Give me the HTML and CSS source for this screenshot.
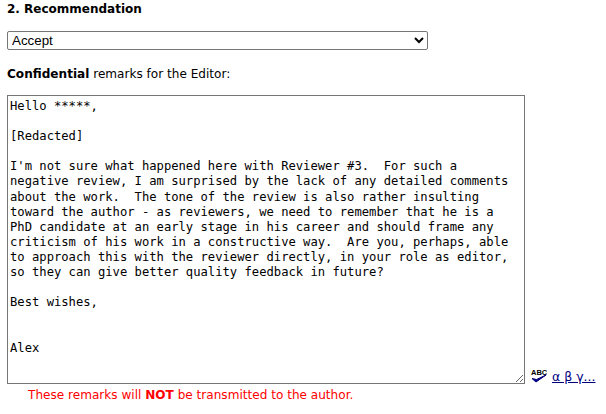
FILE: index.html
```html
<!DOCTYPE html>
<html lang="en">
<head>
    <meta charset="UTF-8">
    <title>Recommendation</title>
    <link rel="stylesheet" href="styles.css">
</head>
<body>
    <h2 class="section-title">2. Recommendation</h2>

    <select class="rec-select">
        <option>Accept</option>
        <option>Minor revision</option>
        <option>Major revision</option>
        <option>Reject</option>
    </select>

    <p class="remarks-label"><b>Confidential</b> remarks for the Editor:</p>

    <div class="remarks-row">
        <textarea class="remarks-box" spellcheck="false">Hello *****,

[Redacted]

I'm not sure what happened here with Reviewer #3.  For such a
negative review, I am surprised by the lack of any detailed comments
about the work.  The tone of the review is also rather insulting
toward the author - as reviewers, we need to remember that he is a
PhD candidate at an early stage in his career and should frame any
criticism of his work in a constructive way.  Are you, perhaps, able
to approach this with the reviewer directly, in your role as editor,
so they can give better quality feedback in future?

Best wishes,


Alex</textarea>
        <div class="tools">
            <!-- spell check icon -->
            <svg class="spell-icon" width="17" height="16" viewBox="0 0 17 16">
                <text x="1" y="7" class="spell-text">ABC</text>
                <path d="M2 10.5l4 3.5 10-7-9.5 4.5z" fill="#000080" stroke="#000080" stroke-width="1" stroke-linejoin="round"/>
            </svg>
            <a href="#" class="symbols">α β γ...</a>
        </div>
    </div>

    <p class="warning">These remarks will <b>NOT</b> be transmitted to the author.</p>
</body>
</html>
```

FILE: styles.css
```css
* {
    box-sizing: border-box;
}

html, body {
    height: 100%;
}

body {
    margin: 0;
    padding: 0 7px;
    overflow: hidden;
    background-color: #fff;
    color: #000;
    font-family: "DejaVu Sans", sans-serif;
    font-size: 12.08px;
}

.section-title {
    margin: 0;
    padding-top: 2px;
    font-size: 12px;
    line-height: 15px;
    font-weight: bold;
}

.rec-select {
    display: block;
    width: 421px;
    height: 19px;
    margin-top: 14px;
    padding: 0;
    background-color: #fff;
    border: 1px solid #767676;
    border-radius: 2px;
    font-family: "Liberation Sans", sans-serif;
    font-size: 13.33px;
}

.remarks-label {
    margin: 17px 0 0;
    line-height: 15px;
}

.remarks-row {
    display: flex;
    align-items: flex-end;
    margin-top: 13px;
}

.remarks-box {
    display: block;
    width: 518px;
    height: 289px;
    margin: 0;
    padding: 3px 2px 2px;
    background-color: #fff;
    border: 1px solid #767676;
    border-radius: 0;
    color: #000;
    font-family: "DejaVu Sans Mono", monospace;
    font-size: 12.18px;
    line-height: 15.1px;
    overflow: hidden;
}

.tools {
    display: flex;
    align-items: flex-end;
    gap: 5px;
    margin-left: 5px;
}

.spell-icon {
    display: block;
}

.spell-text {
    font-family: "Liberation Sans", sans-serif;
    font-size: 7.5px;
    font-weight: bold;
}

.symbols {
    color: #00007f;
    font-size: 12.5px;
    line-height: 15px;
}

.warning {
    margin: 4px 0 0 21px;
    color: #f00;
    line-height: 15px;
}
```
